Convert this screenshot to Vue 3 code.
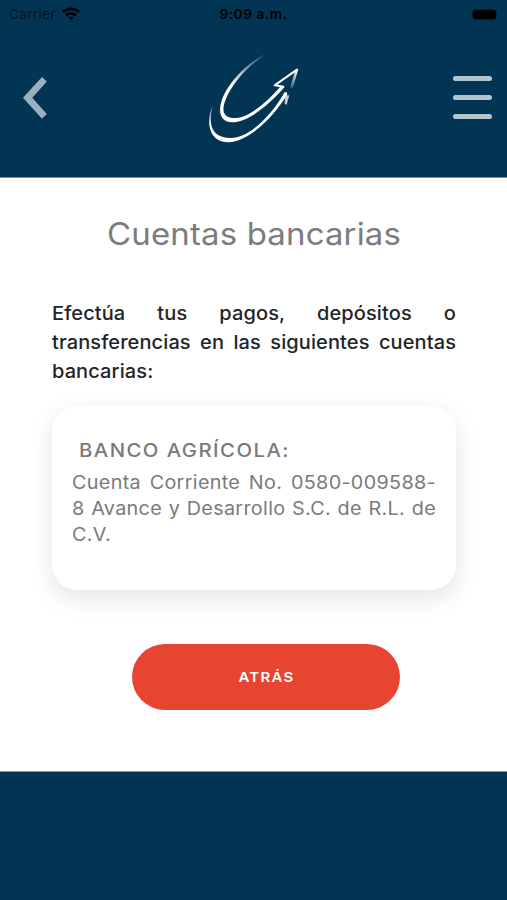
<script setup>
const intro = [
  { text: 'Efectúa tus pagos, depósitos o' },
  { text: 'transferencias en las siguientes cuentas' },
  { text: 'bancarias:', last: true },
]
const account = [
  { text: 'Cuenta Corriente No. 0580-009588-' },
  { text: '8 Avance y Desarrollo S.C. de R.L. de' },
  { text: 'C.V.', last: true },
]
</script>

<template>
  <div class="screen">
    <header class="header">
      <div class="status">
        <div class="carrier">
          <span>Carrier</span>
          <svg class="wifi" viewBox="0 0 18 14" fill="none" stroke="#000" stroke-width="2.7">
            <path d="M1 5.1C5.6.8 12.4.8 17 5.1" />
            <path d="M4 8.5c2.9-2.7 7.1-2.7 10 0" />
            <path d="M9 13.4 6.2 10.6c1.5-1.5 4.1-1.5 5.6 0Z" fill="#000" stroke="none" />
          </svg>
        </div>
        <span class="time">9:09 a.m.</span>
        <div class="battery-area"><i class="battery"></i></div>
      </div>
      <nav class="nav">
        <button class="icon-button" aria-label="Atrás">
          <svg class="back" viewBox="0 0 24 44">
            <path d="M19 .9 23.8 5.6 9.3 21.7 23.8 37.9 19 42.8 0 21.7Z" fill="#9bb0be" />
          </svg>
        </button>
        <svg class="logo" viewBox="0 0 360 330">
          <defs>
            <linearGradient id="fadeUpper" gradientUnits="userSpaceOnUse" x1="0" y1="25" x2="0" y2="120">
              <stop offset="0" stop-color="#fff" stop-opacity=".12" />
              <stop offset="1" stop-color="#fff" />
            </linearGradient>
            <linearGradient id="fadeLower" gradientUnits="userSpaceOnUse" x1="40" y1="180" x2="62" y2="232">
              <stop offset="0" stop-color="#fff" stop-opacity=".2" />
              <stop offset="1" stop-color="#fff" />
            </linearGradient>
            <linearGradient id="fadeTip" gradientUnits="userSpaceOnUse" x1="306" y1="75" x2="290" y2="130">
              <stop offset="0" stop-color="#fff" />
              <stop offset="1" stop-color="#fff" stop-opacity=".2" />
            </linearGradient>
          </defs>
          <path fill="url(#fadeUpper)" d="M214 27C160 49 91 118 77 178C70 211 83 232 111 232C157 232 220 183 268 127L260 121C219 169 162 219 120 219C89 219 80 202 88 175C100 132 150 66 214 27Z" />
          <path fill="url(#fadeLower)" d="M54 182C43 201 41 221 43 241C48 275 68 292 101 292C163 290 241 211 277 147L269 141C232 208 165 278 107 279C72 279 52 264 48 235C46 215 49 199 54 182Z" />
          <path d="M265 125 239 121 306 74" fill="none" stroke="#fff" stroke-width="6" stroke-linejoin="round" stroke-linecap="round" />
          <path d="M301 76 310 73 293 130 286 126Z" fill="url(#fadeTip)" />
          <path d="M270 143 276 140 277 152 283 150 275 179 269 177Z" fill="#fff" fill-opacity=".75" />
        </svg>
        <button class="icon-button menu" aria-label="Menú"><i></i><i></i><i></i></button>
      </nav>
    </header>
    <main class="content">
      <h1 class="title">Cuentas bancarias</h1>
      <p class="intro">
        <span v-for="line in intro" :key="line.text" class="line" :class="{ last: line.last }">{{ line.text }}</span>
      </p>
      <section class="card">
        <h2 class="bank">BANCO AGRÍCOLA:</h2>
        <p class="account">
          <span v-for="line in account" :key="line.text" class="line" :class="{ last: line.last }">{{ line.text }}</span>
        </p>
      </section>
      <button class="action"><span class="action-label">ATRÁS</span></button>
    </main>
  </div>
</template>

<style>
body { margin: 0; background: #023454; }
</style>

<style scoped>
.screen {
  width: 507px;
  height: 900px;
  overflow: hidden;
  background: #023454;
  font-family: Inter, "Liberation Sans", sans-serif;
}
.header { height: 177px; display: flex; flex-direction: column; }
.status {
  height: 28px;
  padding: 0 9px;
  display: grid;
  grid-template-columns: 1fr auto 1fr;
  align-items: center;
  font-size: 13.7px;
  line-height: 28px;
  color: #000;
}
.carrier { display: flex; align-items: center; gap: 6px; color: #06131d; letter-spacing: .25px; }
.wifi { width: 18px; height: 14px; }
.time { font-weight: 600; letter-spacing: .55px; }
.battery-area { display: flex; justify-content: flex-end; }
.battery { width: 23px; height: 9px; border-radius: 3px; background: #000; margin-right: 2px; box-shadow: 0 0 0 1px #022239; }
.nav { display: flex; padding: 17px 15px 0 23px; }
.icon-button { border: 0; padding: 0; background: none; }
.back { display: block; width: 24px; height: 44px; }
.icon-button:first-child { width: 24px; height: 44px; margin-top: 31px; }
.logo { width: 120px; height: 110px; margin-left: 148px; }
.menu { width: 39px; height: 43px; margin: 31px 0 0 auto; display: flex; flex-direction: column; justify-content: space-between; }
.menu i { height: 5px; width: 39px; border-radius: 2.5px; background: #b3c6d0; }
.content {
  box-sizing: border-box;
  height: 595px;
  padding: 36px 51px 0 52px;
  display: flex;
  flex-direction: column;
  align-items: center;
  background: #fff;
  border-top: 1px solid #7892a4;
  border-bottom: 1px solid #8196a5;
}
/* The headings and copy use slightly extended letterforms. */
.title {
  margin: 0;
  font-size: 30.5px;
  line-height: 40px;
  font-weight: 400;
  letter-spacing: .15px;
  color: #7c7c7c;
  white-space: nowrap;
  transform: scaleX(1.08);
}
.intro {
  align-self: flex-start;
  width: 377.6px;
  margin: 45px 0 0;
  font-size: 18.7px;
  line-height: 29.2px;
  font-weight: 500;
  letter-spacing: .1px;
  color: #212529;
  transform: scaleX(1.07);
  transform-origin: left;
}
.line { display: block; white-space: nowrap; text-align: justify; text-align-last: justify; }
.last { text-align-last: left; }
.card {
  box-sizing: border-box;
  align-self: stretch;
  height: 184px;
  margin-top: 19px;
  padding: 31px 20px 0;
  border-radius: 25px;
  background: #fff;
  box-shadow: 0 8px 24px rgba(0, 0, 0, .11);
  color: #7a7a7a;
}
.bank {
  margin: 0 0 6px 7px;
  font-size: 18.5px;
  line-height: 26px;
  font-weight: 500;
  letter-spacing: 1.3px;
  white-space: nowrap;
  transform: scaleX(1.1);
  transform-origin: left;
}
.account {
  width: 340.2px;
  margin: 0;
  font-size: 18.5px;
  line-height: 26px;
  font-weight: 400;
  letter-spacing: .3px;
  transform: scaleX(1.07);
  transform-origin: left;
}
.action {
  width: 268px;
  height: 66px;
  margin: 54px 0 0 24px;
  padding: 0;
  border: 0;
  border-radius: 33px;
  background: #e74532;
  color: #fff;
  font: 600 13.7px/66px Inter, sans-serif;
  letter-spacing: 1.1px;
}
.action-label { display: inline-block; transform: scaleX(1.1); }
</style>
